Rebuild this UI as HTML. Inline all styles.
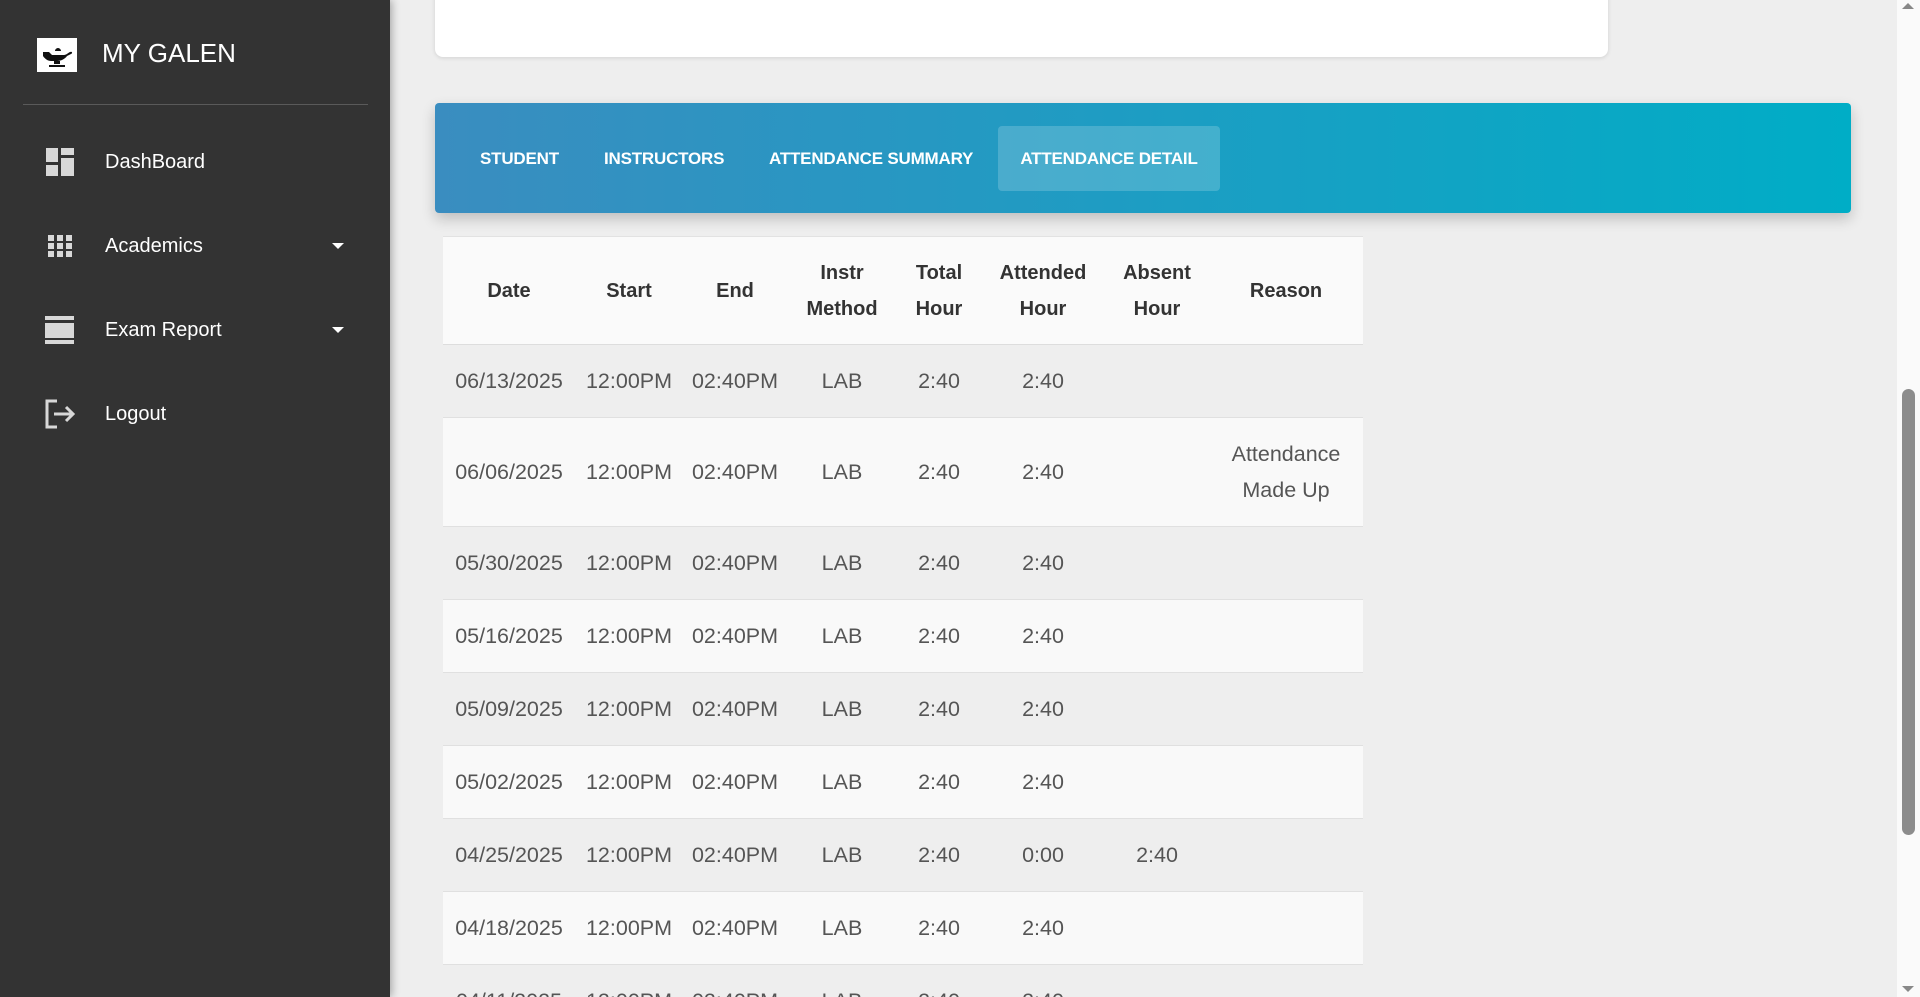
<!DOCTYPE html>
<html><head><meta charset="utf-8"><style>
*{box-sizing:border-box;margin:0;padding:0}
html,body{width:1920px;height:997px;overflow:hidden}
body{background:#eeeeee;font-family:"Liberation Sans",sans-serif;position:relative}
.side{position:absolute;left:0;top:0;width:390px;height:997px;background:#333333;box-shadow:2px 0 8px rgba(0,0,0,.3)}
.logo{position:absolute;left:37px;top:38px;width:40px;height:34px;background:#fff}
.brand{position:absolute;left:102px;top:38px;color:#fff;font-size:26px;line-height:30px}
.div{position:absolute;left:23px;top:104px;width:345px;height:1px;background:#5a5a5a}
.item{position:absolute;left:0;width:390px;height:40px;color:#fff;font-size:20px}
.item .t{position:absolute;left:105px;top:9px}
.item .ic{position:absolute;left:45px;top:5px}
.caret{position:absolute;left:332px;top:17px;width:0;height:0;border-left:6px solid transparent;border-right:6px solid transparent;border-top:6px solid #fff}
.card{position:absolute;left:435px;top:-10px;width:1173px;height:67px;background:#fff;border-radius:8px;box-shadow:0 1px 4px rgba(0,0,0,.12)}
.tabs{position:absolute;left:435px;top:103px;width:1416px;height:110px;border-radius:4px;background:linear-gradient(90deg,#3a8dc0,#00adc6);box-shadow:0 6px 14px rgba(0,0,0,.2)}
.tab{position:absolute;top:23px;height:65px;line-height:65px;color:#fff;font-weight:bold;font-size:17px;padding:0 22px;border-radius:4px;white-space:nowrap;letter-spacing:-0.2px}
.wrap{position:absolute;left:0;top:0;width:1897px;height:997px;overflow:hidden}
table{position:absolute;left:443px;top:236px;width:920px;border-collapse:collapse;font-size:21.5px;color:#555;text-align:center}
th{background:#fafafa;color:#333;font-weight:bold;font-size:20px;height:108px;line-height:36px;border-top:1px solid #e2e2e2;border-bottom:1px solid #ddd}
td{height:73px;line-height:36px;border-bottom:1px solid #e0e0e0;white-space:nowrap}
tr.o td{background:#eeeeee}
tr.e td{background:#f9f9f9}
.sb{position:absolute;left:1897px;top:0;width:23px;height:997px;background:#fafafa}
.thumb{position:absolute;left:1902px;top:389px;width:13px;height:446px;background:#8c8c8c;border-radius:7px}
</style></head><body>
<div class="wrap">
<div class="card"></div>
<div class="tabs">
<div class="tab" style="left:23px">STUDENT</div>
<div class="tab" style="left:147px">INSTRUCTORS</div>
<div class="tab" style="left:312px">ATTENDANCE SUMMARY</div>
<div class="tab" style="left:563px;width:222px;text-align:center;padding:0;background:rgba(255,255,255,.18)">ATTENDANCE DETAIL</div>
</div>
<table>
<colgroup><col style="width:132px"><col style="width:108px"><col style="width:104px"><col style="width:110px"><col style="width:84px"><col style="width:124px"><col style="width:104px"><col style="width:154px"></colgroup>
<tr><th>Date</th><th>Start</th><th>End</th><th>Instr<br>Method</th><th>Total<br>Hour</th><th>Attended<br>Hour</th><th>Absent<br>Hour</th><th>Reason</th></tr>
<tr class="o"><td>06/13/2025</td><td>12:00PM</td><td>02:40PM</td><td>LAB</td><td>2:40</td><td>2:40</td><td></td><td></td></tr>
<tr class="e"><td style="height:109px">06/06/2025</td><td>12:00PM</td><td>02:40PM</td><td>LAB</td><td>2:40</td><td>2:40</td><td></td><td>Attendance<br>Made Up</td></tr>
<tr class="o"><td>05/30/2025</td><td>12:00PM</td><td>02:40PM</td><td>LAB</td><td>2:40</td><td>2:40</td><td></td><td></td></tr>
<tr class="e"><td>05/16/2025</td><td>12:00PM</td><td>02:40PM</td><td>LAB</td><td>2:40</td><td>2:40</td><td></td><td></td></tr>
<tr class="o"><td>05/09/2025</td><td>12:00PM</td><td>02:40PM</td><td>LAB</td><td>2:40</td><td>2:40</td><td></td><td></td></tr>
<tr class="e"><td>05/02/2025</td><td>12:00PM</td><td>02:40PM</td><td>LAB</td><td>2:40</td><td>2:40</td><td></td><td></td></tr>
<tr class="o"><td>04/25/2025</td><td>12:00PM</td><td>02:40PM</td><td>LAB</td><td>2:40</td><td>0:00</td><td>2:40</td><td></td></tr>
<tr class="e"><td>04/18/2025</td><td>12:00PM</td><td>02:40PM</td><td>LAB</td><td>2:40</td><td>2:40</td><td></td><td></td></tr>
<tr class="o"><td>04/11/2025</td><td>12:00PM</td><td>02:40PM</td><td>LAB</td><td>2:40</td><td>2:40</td><td></td><td></td></tr>
</table>
</div>
<div class="side">
<div class="logo"><svg width="40" height="34" viewBox="0 0 40 34"><path d="M6 14h6l3 3h12c2 0 4-2 6-3 2-1 3 1 1 2l-4 2c-2 3-6 5-10 5h-6c-3 0-6-2-8-5z M18 13c0-2 2-3 3-3s3 1 3 3z M17 23h6v3h-6z M12 27h16v2H12z" fill="#111"/></svg></div>
<div class="brand">MY GALEN</div>
<div class="div"></div>
<div class="item" style="top:142px"><svg class="ic" width="30" height="30" viewBox="0 0 30 30"><path d="M1 1h12v14H1zM16 1h13v7H16zM1 18h12v11H1zM16 11h13v18H16z" fill="#d8d8d8"/></svg><span class="t">DashBoard</span></div>
<div class="item" style="top:226px"><svg class="ic" width="30" height="30" viewBox="0 0 30 30"><g fill="#d8d8d8"><rect x="3" y="4" width="6" height="6"/><rect x="12" y="4" width="6" height="6"/><rect x="21" y="4" width="6" height="6"/><rect x="3" y="12" width="6" height="6"/><rect x="12" y="12" width="6" height="6"/><rect x="21" y="12" width="6" height="6"/><rect x="3" y="20" width="6" height="6"/><rect x="12" y="20" width="6" height="6"/><rect x="21" y="20" width="6" height="6"/></g></svg><span class="t">Academics</span><div class="caret"></div></div>
<div class="item" style="top:310px"><svg class="ic" width="30" height="30" viewBox="0 0 30 30"><g fill="#d8d8d8"><rect x="0" y="1" width="29" height="4"/><rect x="0" y="8" width="29" height="15"/><rect x="0" y="25" width="29" height="4"/></g></svg><span class="t">Exam Report</span><div class="caret"></div></div>
<div class="item" style="top:394px"><svg class="ic" width="32" height="30" viewBox="0 0 32 30"><path d="M12 2H2v26h10" fill="none" stroke="#d8d8d8" stroke-width="3"/><path d="M9 15h19M21 8l7 7-7 7" fill="none" stroke="#d8d8d8" stroke-width="3"/></svg><span class="t">Logout</span></div>
</div>
<div class="sb"></div>
<div class="thumb"></div>
<div style="position:absolute;left:1902px;top:3px;border-left:6px solid transparent;border-right:6px solid transparent;border-bottom:6px solid #888"></div>
<div style="position:absolute;left:1902px;top:986px;border-left:6px solid transparent;border-right:6px solid transparent;border-top:6px solid #888"></div>
</body></html>
